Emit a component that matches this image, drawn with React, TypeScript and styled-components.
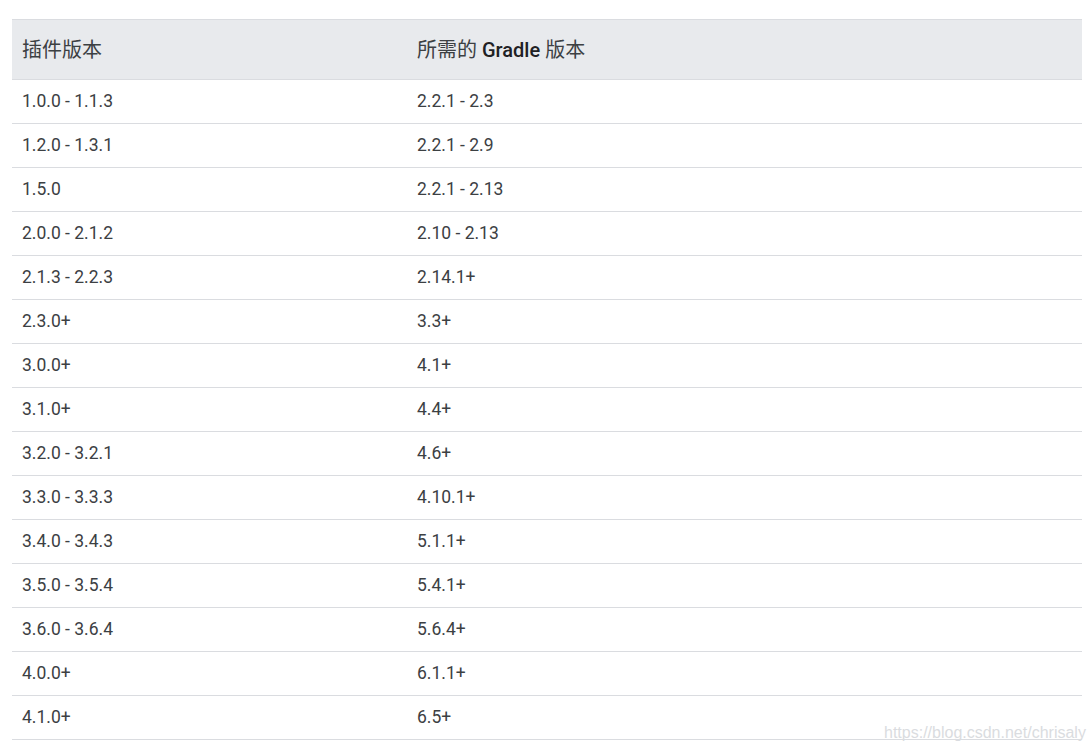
import React from "react";
import styled, { createGlobalStyle } from "styled-components";

const Global = createGlobalStyle`
  html, body { margin: 0; padding: 0; background: #fff; }
  body { font-family: Roboto, "Noto Sans CJK SC", sans-serif; }
`;

const Page = styled.div`
  padding: 19px 10px 0 12px;
  min-height: 751px;
  box-sizing: border-box;
  position: relative;
`;

const Table = styled.table`
  width: 1070px;
  border-collapse: collapse;
  font-family: Roboto, "Noto Sans CJK SC", sans-serif;
`;

const HeadCell = styled.th<{ w?: number }>`
  background: #e8eaed;
  border-top: 1px solid #dadce0;
  border-bottom: 1px solid #dadce0;
  height: 60px;
  padding: 0 10px 2px;
  text-align: left;
  font-weight: 400;
  font-size: 20px;
  color: #3c4043;
  width: ${(p) => (p.w ? `${p.w}px` : "auto")};
  box-sizing: border-box;
`;

const Strong = styled.span`
  font-weight: 500;
  color: #202124;
`;

const Cell = styled.td`
  height: 41px;
  padding: 0 10px 2px;
  border-bottom: 1px solid #dadce0;
  font-size: 17.5px;
  color: #3c4043;
`;

const Watermark = styled.div`
  position: absolute;
  left: 884px;
  top: 724px;
  font-family: "Liberation Sans", Arial, sans-serif;
  font-size: 16px;
  color: #dadce0;
`;

const rows: [string, string][] = [
  ["1.0.0 - 1.1.3", "2.2.1 - 2.3"],
  ["1.2.0 - 1.3.1", "2.2.1 - 2.9"],
  ["1.5.0", "2.2.1 - 2.13"],
  ["2.0.0 - 2.1.2", "2.10 - 2.13"],
  ["2.1.3 - 2.2.3", "2.14.1+"],
  ["2.3.0+", "3.3+"],
  ["3.0.0+", "4.1+"],
  ["3.1.0+", "4.4+"],
  ["3.2.0 - 3.2.1", "4.6+"],
  ["3.3.0 - 3.3.3", "4.10.1+"],
  ["3.4.0 - 3.4.3", "5.1.1+"],
  ["3.5.0 - 3.5.4", "5.4.1+"],
  ["3.6.0 - 3.6.4", "5.6.4+"],
  ["4.0.0+", "6.1.1+"],
  ["4.1.0+", "6.5+"],
];

export default function App() {
  return (
    <Page>
      <Global />
      <Table>
        <thead>
          <tr>
            <HeadCell w={395}>插件版本</HeadCell>
            <HeadCell>
              所需的 <Strong>Gradle</Strong> 版本
            </HeadCell>
          </tr>
        </thead>
        <tbody>
          {rows.map(([a, b]) => (
            <tr key={a}>
              <Cell>{a}</Cell>
              <Cell>{b}</Cell>
            </tr>
          ))}
        </tbody>
      </Table>
      <Watermark>https://blog.csdn.net/chrisaly</Watermark>
    </Page>
  );
}
